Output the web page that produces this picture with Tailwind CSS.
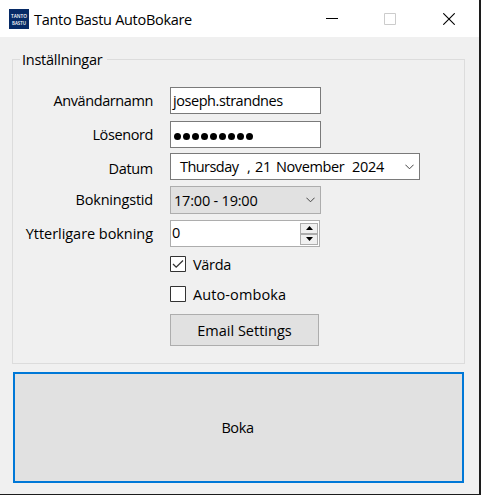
<!DOCTYPE html>
<html lang="sv">
<head>
<meta charset="utf-8">
<title>Tanto Bastu AutoBokare</title>
<script src="https://cdn.jsdelivr.net/npm/@tailwindcss/browser@4"></script>
</head>
<body class="w-[481px] h-[495px] overflow-hidden bg-[#1c1c1c] font-['Open_Sans',sans-serif] text-[14.5px] leading-5 text-black">
<div class="w-[479px] h-[494px] bg-[#f0f0f0] flex flex-col whitespace-nowrap">
  <header class="h-[37px] shrink-0 bg-white flex items-center pl-[9px]">
    <svg class="w-5 h-5 shrink-0" viewBox="0 0 20 20"><rect width="20" height="20" fill="#062a66"/><g fill="#fff" font-family="Open Sans, sans-serif" font-weight="600" font-size="5.8"><text x="2" y="8.5" textLength="16" lengthAdjust="spacingAndGlyphs">TANTO</text><text x="3" y="15.8" textLength="14" lengthAdjust="spacingAndGlyphs">BASTU</text></g></svg>
    <h1 class="ml-[5px] w-[292px] pt-[2px] tracking-[-0.3px]">Tanto Bastu AutoBokare</h1>
    <svg class="w-3 h-3 shrink-0" viewBox="0 0 12 12"><path d="M0 5.5H12" stroke="#000"/></svg>
    <svg class="w-3 h-3 ml-[46px] shrink-0" viewBox="0 0 12 12"><path d="M.5.5h11v11H.5z" fill="none" stroke="#ccc"/></svg>
    <svg class="w-3 h-3 ml-[47px] shrink-0" viewBox="0 0 12 12"><path d="M.3.3l11.4 11.4M11.7.3L.3 11.7" stroke="#000" stroke-width="1.1"/></svg>
  </header>
  <main class="pl-3 pt-[22px]">
    <fieldset class="w-[453px] h-[305px] border border-[#dcdcdc]">
      <div class="-mt-[10px] h-5 ml-[7px] w-[87px] px-[2px] bg-[#f0f0f0] tracking-[-0.25px]">Inställningar</div>
      <div class="grid grid-cols-[140px_250px] gap-x-[17px] mt-[17px]">
        <div class="flex flex-col items-end">
          <label class="h-[27px] mb-[7px] leading-[27px] tracking-[-0.4px]">Användarnamn</label>
          <label class="h-[27px] mb-[5px] leading-[27px] tracking-[-0.4px]">Lösenord</label>
          <label class="h-[27px] mb-[6px] leading-[31px] tracking-[-0.3px]">Datum</label>
          <label class="h-[28px] mb-[6px] leading-[27px] tracking-[-0.2px]">Bokningstid</label>
          <label class="h-[27px] leading-[27px] tracking-[-0.05px]">Ytterligare bokning</label>
        </div>
        <div class="flex flex-col items-start">
          <div class="w-[151px] h-[27px] mb-[7px] border border-[#7a7a7a] bg-white pl-[2px] leading-[26px] tracking-[-0.44px]">joseph.strandnes</div>
          <div class="w-[151px] h-[27px] mb-[5px] border border-[#7a7a7a] bg-white pl-[3px] pt-[3px] flex items-center gap-[2px]">
            <i class="w-[7px] h-[7px] rounded-full bg-black"></i><i class="w-[7px] h-[7px] rounded-full bg-black"></i><i class="w-[7px] h-[7px] rounded-full bg-black"></i><i class="w-[7px] h-[7px] rounded-full bg-black"></i><i class="w-[7px] h-[7px] rounded-full bg-black"></i><i class="w-[7px] h-[7px] rounded-full bg-black"></i><i class="w-[7px] h-[7px] rounded-full bg-black"></i><i class="w-[7px] h-[7px] rounded-full bg-black"></i><i class="w-[7px] h-[7px] rounded-full bg-black"></i>
          </div>
          <div class="w-[250px] h-[27px] mb-[6px] border border-[#7a7a7a] bg-white pl-[9px] flex items-center">
            <div class="w-[67px] tracking-[-0.55px]">Thursday</div><div class="w-[8px]">,</div><div class="w-[21px] tracking-[-0.3px]">21</div><div class="w-[76px] tracking-[-0.4px]">November</div><div class="w-[53px] tracking-[-0.25px]">2024</div>
            <svg class="w-[9px] h-[6px] shrink-0" viewBox="0 0 9 6"><path d="M.4.7L4.5 4.8 8.6.7" fill="none" stroke="#444"/></svg>
          </div>
          <div class="w-[151px] h-[28px] mb-[6px] border border-[#adadad] bg-[#e1e1e1] pl-[3px] flex items-center"><div class="w-[132px] pt-px tracking-[-0.2px]">17:00 - 19:00</div>
            <svg class="w-[9px] h-[6px] shrink-0" viewBox="0 0 9 6"><path d="M.4.7L4.5 4.8 8.6.7" fill="none" stroke="#444"/></svg>
          </div>
          <div class="w-[150px] h-[27px] mb-[9px] border border-[#adadad] bg-white pl-px flex items-center"><div class="w-[128px] -mt-px">0</div>
            <div class="w-[18px] h-[22px] shrink-0 flex flex-col">
              <div class="h-[11px] border border-[#adadad] bg-[#f0f0f0] flex items-center justify-center"><svg class="w-[7px] h-1" viewBox="0 0 7 4"><path d="M0 4L3.5 0 7 4z"/></svg></div>
              <div class="h-[11px] border border-[#adadad] bg-[#f0f0f0] flex items-center justify-center"><svg class="w-[7px] h-1" viewBox="0 0 7 4"><path d="M0 0L3.5 4 7 0z"/></svg></div>
            </div>
          </div>
          <div class="h-4 mb-[14px] flex items-center gap-[7px]"><svg class="w-4 h-4" viewBox="0 0 16 16"><path d="M.5.5h15v15H.5z" fill="#fff" stroke="#333"/><path d="M3 8l3.2 3.2L13 4.5" fill="none" stroke="#333" stroke-width="1.3"/></svg><span class="pt-[2px] tracking-[-0.3px]">Värda</span></div>
          <div class="h-4 mb-3 flex items-center gap-[7px]"><svg class="w-4 h-4" viewBox="0 0 16 16"><path d="M.5.5h15v15H.5z" fill="#fff" stroke="#333"/></svg><span class="pt-[2px] tracking-[0.1px]">Auto-omboka</span></div>
          <button class="w-[149px] h-8 pt-[2px] border border-[#adadad] bg-[#e1e1e1]">Email Settings</button>
        </div>
      </div>
    </fieldset>
    <button class="ml-px mt-2 w-[451px] h-[111px] pr-[2px] border-2 border-[#0078d7] bg-[#e1e1e1] tracking-[-0.4px]">Boka</button>
  </main>
</div>
</body>
</html>
